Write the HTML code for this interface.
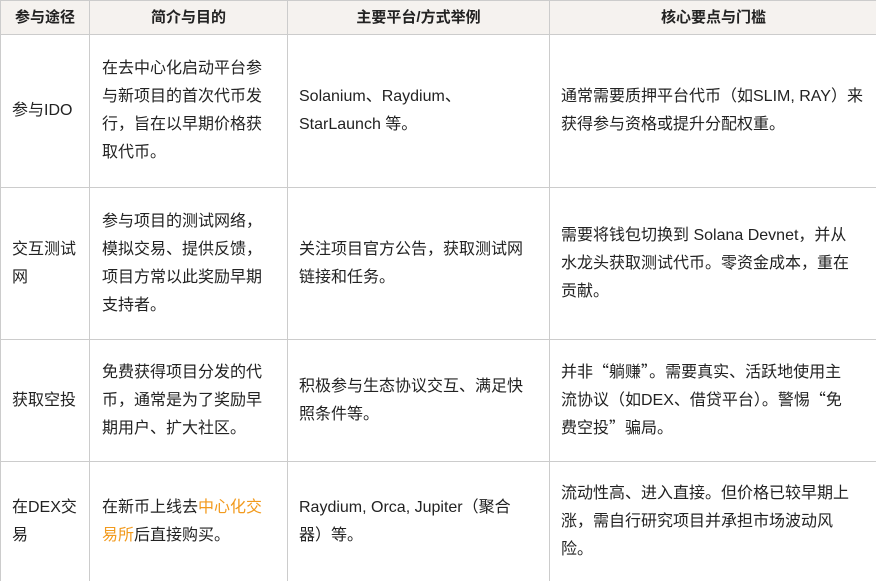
<!DOCTYPE html>
<html><head><meta charset="utf-8"><style>
html,body{margin:0;padding:0;background:#fff;width:876px;height:581px;overflow:hidden}
table{border-collapse:collapse;table-layout:fixed;width:877px;font-family:"Liberation Sans","Noto Sans CJK SC",sans-serif;font-size:16px;color:#222;line-height:28px}
td,th{border:1px solid #ccc;padding:0 12px;vertical-align:middle;text-align:left}
td.c1{padding:0 8px 0 11px}
td.c3{padding:0 16px 0 11px}
td.c4{padding:0 8px 0 11px}
th{background:#f5f2ef;font-weight:bold;text-align:center;height:33px;padding:0 6px;font-size:15px}
.o{color:#f29a1d}
.q{font-family:"Noto Sans CJK SC",sans-serif;line-height:1}
</style></head><body>
<table>
<colgroup><col style="width:89px"><col style="width:198px"><col style="width:262px"><col style="width:328px"></colgroup>
<tr><th>参与途径</th><th>简介与目的</th><th>主要平台/方式举例</th><th>核心要点与门槛</th></tr>
<tr style="height:153px"><td class="c1">参与IDO</td><td>在去中心化启动平台参与新项目的首次代币发行，旨在以早期价格获取代币。</td><td class="c3">Solanium、Raydium、StarLaunch 等。</td><td class="c4">通常需要质押平台代币（如SLIM, RAY）来<br>获得参与资格或提升分配权重。</td></tr>
<tr style="height:152px"><td class="c1">交互测试网</td><td>参与项目的测试网络，模拟交易、提供反馈，项目方常以此奖励早期支持者。</td><td class="c3">关注项目官方公告，获取测试网链接和任务。</td><td class="c4">需要将钱包切换到 Solana Devnet，并从<br>水龙头获取测试代币。零资金成本，重在<br>贡献。</td></tr>
<tr style="height:122px"><td class="c1">获取空投</td><td>免费获得项目分发的代币，通常是为了奖励早期用户、扩大社区。</td><td class="c3">积极参与生态协议交互、满足快照条件等。</td><td class="c4">并非<span class="q">“</span>躺赚<span class="q">”</span>。需要真实、活跃地使用主<br>流协议（如DEX、借贷平台）。警惕<span class="q">“</span>免<br>费空投<span class="q">”</span>骗局。</td></tr>
<tr style="height:121px"><td class="c1">在DEX交易</td><td>在新币上线去<span class="o">中心化交易所</span>后直接购买。</td><td class="c3">Raydium, Orca, Jupiter（聚合器）等。</td><td class="c4">流动性高、进入直接。但价格已较早期上<br>涨，需自行研究项目并承担市场波动风<br>险。</td></tr>
</table>
</body></html>
